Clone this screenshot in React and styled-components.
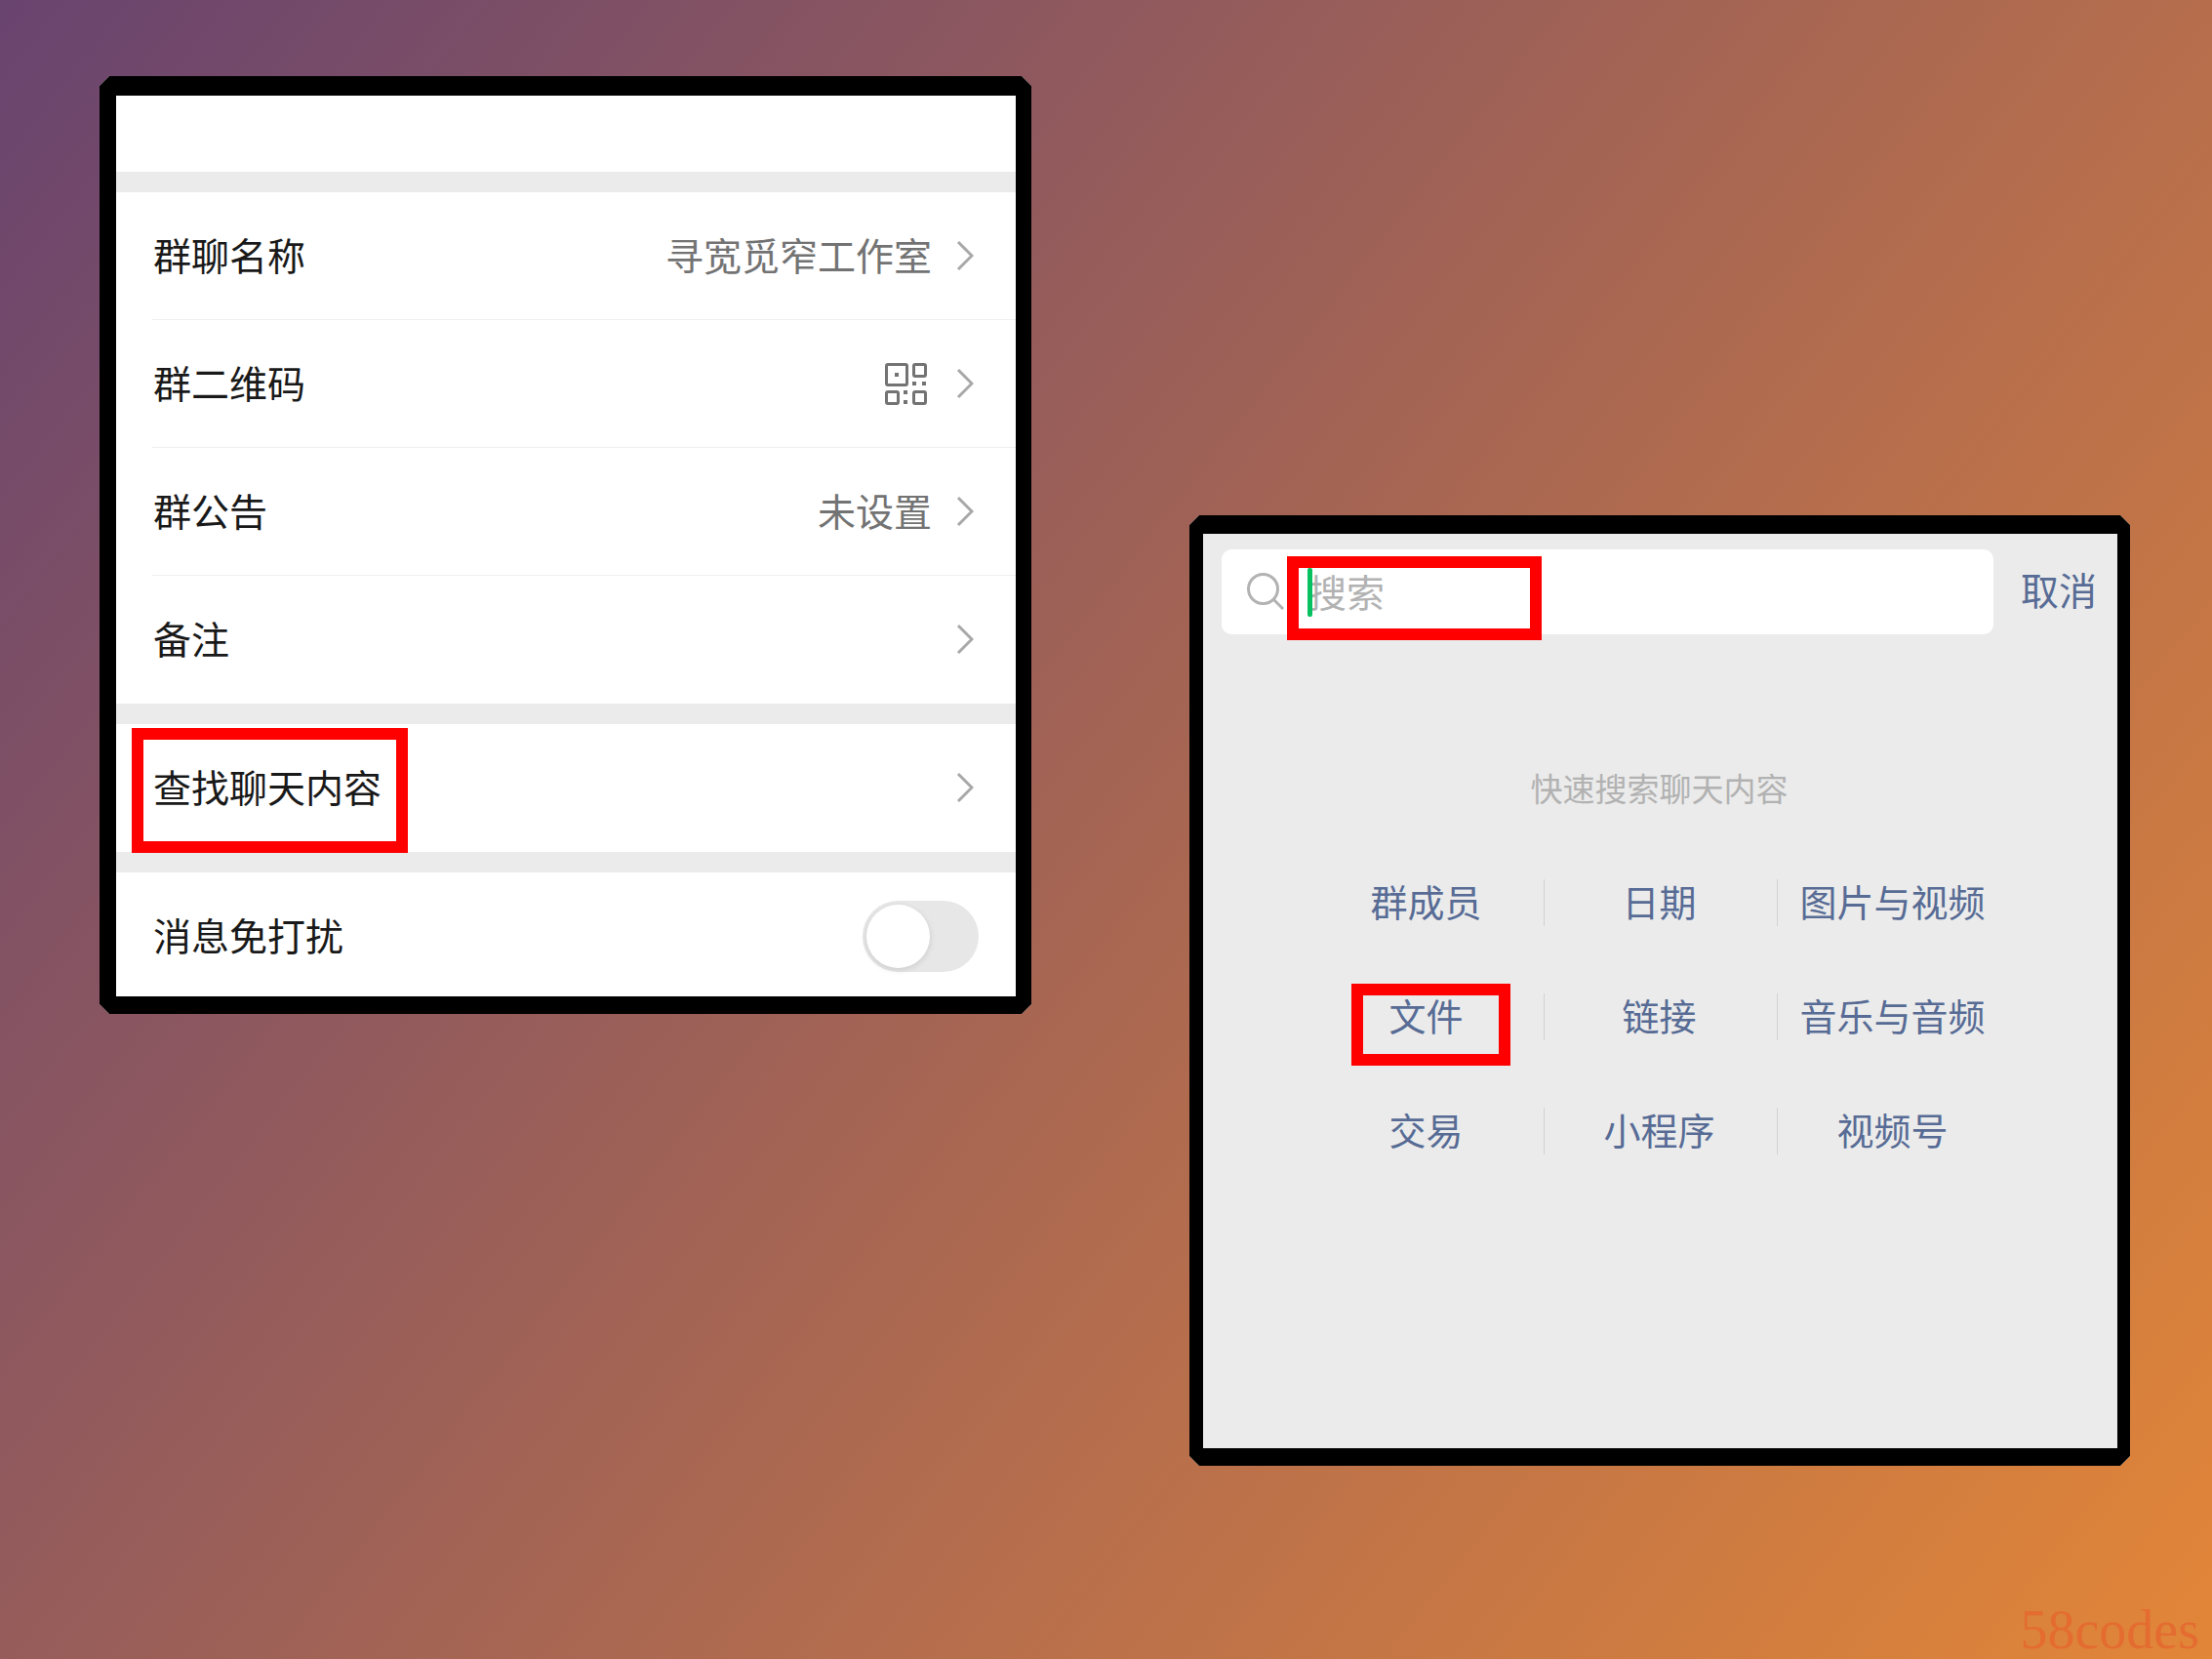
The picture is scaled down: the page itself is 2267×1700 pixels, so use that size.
import React from 'react'
import styled, { createGlobalStyle } from 'styled-components'

const GlobalStyle = createGlobalStyle`
  * {
    box-sizing: border-box;
  }

  body {
    margin: 0;
    font-family: "Noto Sans CJK SC", sans-serif;
  }

  button,
  input {
    font: inherit;
    color: inherit;
    margin: 0;
    padding: 0;
    border: none;
    background: none;
  }
`

const Page = styled.div`
  display: flex;
  flex-direction: column;
  min-height: 100vh;
  background: linear-gradient(128deg, #69446f, #e28638);
`

const Panels = styled.main`
  display: grid;
  grid-template-columns: 955fr 964fr;
  align-items: start;
  gap: 162px;
  padding: 78px 84px 0 102px;
`

const Panel = styled.section`
  border: solid #000;
  background: #ebebeb;
  clip-path: polygon(
    10px 0,
    calc(100% - 10px) 0,
    100% 10px,
    100% calc(100% - 10px),
    calc(100% - 10px) 100%,
    10px 100%,
    0 calc(100% - 10px),
    0 10px
  );
`

const SettingsPanel = styled(Panel)`
  border-width: 20px 16px 18px 17px;
`

const SearchPanel = styled(Panel)`
  border-width: 19px 13px 18px 14px;
  margin-top: 450px;
  padding-bottom: 267px;
`

const Blank = styled.div`
  height: 78px;
  background: #fff;
`

const Group = styled.div`
  margin-top: 21px;
  padding: 0 0 1px 37px;
  background: #fff;
`

const Row = styled.div`
  position: relative;
  display: flex;
  align-items: center;
  width: 100%;
  padding: 32px 43px ${p => (p.$last ? 28 : 32)}px 0;
  font-size: 39px;
  line-height: 62px;
  text-align: left;
  color: #191919;

  &:not(:last-child) {
    border-bottom: solid 1px #efefef;
  }
`

const Label = styled.span`
  margin-right: auto;
  padding: 0 0 4px 1px;
`

const Value = styled.span`
  margin-right: 25px;
  padding-bottom: 4px;
  color: #737373;
`

const Highlight = styled.span`
  position: absolute;
  border: solid 12px #fe0000;
  pointer-events: none;
`

const RowHighlight = styled(Highlight)`
  top: 4px;
  bottom: -2px;
  left: -21px;
  width: 283px;
`

const QrIcon = styled.svg`
  display: block;
  width: 46px;
  height: 43px;
  margin-right: 27px;
  color: #737373;
`

const Arrow = styled.svg`
  display: block;
  width: 18px;
  height: 32px;
  color: #a8a8a8;
`

const Switch = styled.input`
  appearance: none;
  width: 119px;
  height: 73px;
  margin: -4px -5px -4px 0;
  padding: 4px;
  border-radius: 37px;
  background: #e7e7e7;

  &::before {
    content: '';
    display: block;
    width: 65px;
    height: 65px;
    border-radius: 50%;
    background: #fff;
    box-shadow: 0 2px 6px rgba(0, 0, 0, 0.12);
  }

  &:checked::before {
    margin-left: auto;
  }
`

const SearchBar = styled.form`
  display: flex;
  align-items: center;
  gap: 28px;
  padding: 16px 21px 0 19px;
  font-size: 39px;
  line-height: 60px;
`

const SearchBox = styled.label`
  position: relative;
  display: flex;
  flex: 1;
  align-items: center;
  height: 87px;
  padding-left: 26px;
  border-radius: 10px;
  background: #fff;
`

const SearchIcon = styled.svg`
  display: block;
  width: 38px;
  height: 40px;
  margin-right: 25px;
  color: #b2b2b2;
`

const SearchInput = styled.input`
  flex: 1;
  min-width: 0;
  height: 60px;
  padding-bottom: 4px;
  outline: none;

  &::placeholder {
    color: #b2b2b2;
    opacity: 1;
  }
`

const Caret = styled.span`
  position: absolute;
  top: 19px;
  left: 88px;
  width: 5px;
  height: 50px;
  border-radius: 2px;
  background: #07c160;
`

const SearchHighlight = styled(Highlight)`
  top: 7px;
  left: 67px;
  width: 261px;
  height: 86px;
`

const Cancel = styled.button`
  padding-bottom: 8px;
  color: #576b95;
`

const Hint = styled.p`
  margin: 133px 2px 35px 0;
  font-size: 33px;
  line-height: 48px;
  text-align: center;
  color: #b2b2b2;
`

const Filters = styled.div`
  display: grid;
  grid-template-columns: repeat(3, 239px);
  justify-content: center;
  margin-right: 2px;
`

const Filter = styled.button`
  position: relative;
  height: 117px;
  padding-bottom: 4px;
  font-size: 38px;
  white-space: nowrap;
  color: #576b95;

  &:not(:nth-child(3n))::after {
    content: '';
    position: absolute;
    top: 35px;
    right: -2px;
    width: 1px;
    height: 48px;
    background: #d2d2d2;
  }
`

const FilterHighlight = styled(Highlight)`
  top: 25px;
  left: 43px;
  width: 163px;
  height: 84px;
`

const Footer = styled.footer`
  margin-top: auto;
  padding-right: 13px;
  font-family: "Liberation Serif", serif;
  font-size: 56px;
  line-height: 60px;
  text-align: right;
  color: #e46c30;
`

const filters = [
  '群成员',
  '日期',
  '图片与视频',
  '文件',
  '链接',
  '音乐与音频',
  '交易',
  '小程序',
  '视频号',
]

const Chevron = () => (
  <Arrow viewBox="0 0 18 32" fill="none" stroke="currentColor" strokeWidth="3">
    <path d="M2 2 L16 16 L2 30" strokeLinejoin="miter" />
  </Arrow>
)

const QrCode = () => (
  <QrIcon viewBox="0 0 46 43" fill="none" stroke="currentColor" strokeWidth="3">
    <rect x="1.5" y="1.5" width="21" height="21" rx="1.5" />
    <rect x="29.5" y="1.5" width="12" height="12" rx="1.5" />
    <rect x="1.5" y="29.5" width="12" height="12" rx="1.5" />
    <rect x="29.5" y="29.5" width="12" height="12" rx="1.5" />
    <path
      d="M10 10h4v4h-4z M28 19h4v4h-4z M38 19h4v4h-4z M19 28h4v4h-4z M19 38h4v4h-4z"
      fill="currentColor"
      stroke="none"
    />
  </QrIcon>
)

const LinkRow = ({ label, children, highlight }) => (
  <Row as="button" type="button">
    <Label>{label}</Label>
    {children}
    <Chevron />
    {highlight && <RowHighlight />}
  </Row>
)

export default function App() {
  return (
    <Page>
      <GlobalStyle />
      <Panels>
        <SettingsPanel>
          <Blank />
          <Group>
            <LinkRow label="群聊名称">
              <Value>寻宽觅窄工作室</Value>
            </LinkRow>
            <LinkRow label="群二维码">
              <QrCode />
            </LinkRow>
            <LinkRow label="群公告">
              <Value>未设置</Value>
            </LinkRow>
            <LinkRow label="备注" />
          </Group>
          <Group>
            <LinkRow label="查找聊天内容" highlight />
          </Group>
          <Group>
            <Row as="label" $last>
              <Label>消息免打扰</Label>
              <Switch type="checkbox" role="switch" />
            </Row>
          </Group>
        </SettingsPanel>

        <SearchPanel>
          <SearchBar onSubmit={e => e.preventDefault()}>
            <SearchBox>
              <SearchIcon
                viewBox="0 0 38 40"
                fill="none"
                stroke="currentColor"
                strokeWidth="3"
              >
                <circle cx="16.5" cy="16.5" r="15" />
                <path d="M27 27 L37 37" />
              </SearchIcon>
              <SearchInput type="text" placeholder="搜索" aria-label="搜索" />
              <Caret />
              <SearchHighlight />
            </SearchBox>
            <Cancel type="button">取消</Cancel>
          </SearchBar>
          <Hint>快速搜索聊天内容</Hint>
          <Filters>
            {filters.map(name => (
              <Filter key={name} type="button">
                {name}
                {name === '文件' && <FilterHighlight />}
              </Filter>
            ))}
          </Filters>
        </SearchPanel>
      </Panels>
      <Footer>58codes</Footer>
    </Page>
  )
}
